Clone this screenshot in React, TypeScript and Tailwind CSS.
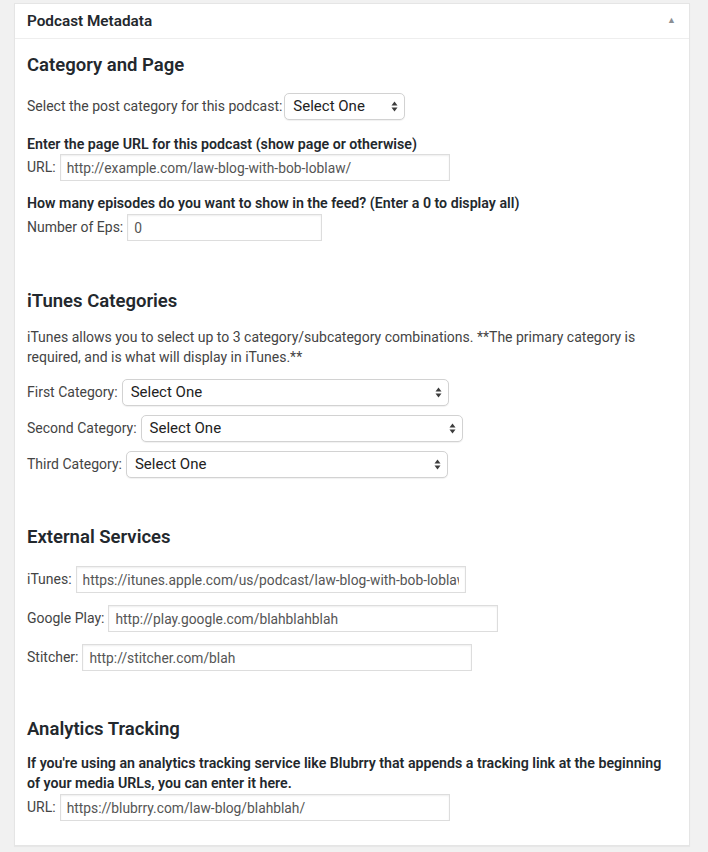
import React from 'react';

const font = "font-['Roboto','Liberation_Sans',sans-serif]";

const Arrows: React.FC = () => (
  <svg width="7" height="11" viewBox="0 0 7 11" className="shrink-0">
    <path d="M3.5 0.5 L6.5 4.5 L0.5 4.5 Z" fill="#3c3c3c" />
    <path d="M3.5 10.5 L6.5 6.5 L0.5 6.5 Z" fill="#3c3c3c" />
  </svg>
);

const FakeSelect: React.FC<{ width: string }> = ({ width }) => (
  <div
    className={`${width} h-[27px] flex items-center justify-between pl-2 pr-[6px] bg-white border border-[#d2d2d2] rounded-[5px] shadow-[0_1px_1px_rgba(0,0,0,0.06)] text-[15px] text-[#222]`}
  >
    <span>Select One</span>
    <Arrows />
  </div>
);

const TextInput: React.FC<{ value: string; width?: string }> = ({ value, width = 'w-[390px]' }) => (
  <input
    readOnly
    value={value}
    className={`${width} h-[27px] px-[6px] border border-[#dddddd] bg-white text-[13.8px] text-[#555] shadow-[inset_0_1px_2px_rgba(0,0,0,0.07)] outline-none ${font}`}
  />
);

const Heading: React.FC<{ children: React.ReactNode; className?: string }> = ({ children, className = '' }) => (
  <h3 className={`text-[18.5px] leading-[24px] font-semibold text-[#23282d] ${className}`}>{children}</h3>
);

export default function App() {
  return (
    <div className={`min-h-[852px] bg-[#f1f1f1] pt-[3px] px-[14px] ${font}`}>
      <div className="w-[676px] bg-white border border-[#e5e5e5] shadow-[0_1px_1px_rgba(0,0,0,0.04)] text-[14px] text-[#444]">
        <div className="h-[35px] flex items-center justify-between pl-3 pr-[12px] border-b border-[#eeeeee]">
          <span className="text-[15.3px] font-semibold text-[#23282d]">Podcast Metadata</span>
          <span className="text-[9px] text-[#8c8f94] pr-[1px]">▲</span>
        </div>

        <div className="px-3 pt-[14px] pb-[24px]">
          <Heading>Category and Page</Heading>
          <div className="mt-[16px] flex items-center gap-[2px]">
            <span>Select the post category for this podcast:</span>
            <FakeSelect width="w-[121px]" />
          </div>

          <p className="mt-[14px] leading-[20px] text-[14.2px] font-semibold text-[#23282d]">
            Enter the page URL for this podcast (show page or otherwise)
          </p>
          <div className="flex items-center gap-[4px]">
            <span>URL:</span>
            <TextInput value="http://example.com/law-blog-with-bob-loblaw/" />
          </div>

          <p className="mt-[12px] leading-[20px] text-[14.2px] font-semibold text-[#23282d]">
            How many episodes do you want to show in the feed? (Enter a 0 to display all)
          </p>
          <div className="mt-[1px] flex items-center gap-[4px]">
            <span>Number of Eps:</span>
            <TextInput value="0" width="w-[195px]" />
          </div>

          <Heading className="mt-[48px]">iTunes Categories</Heading>
          <p className="mt-[14px] leading-[20px]">
            iTunes allows you to select up to 3 category/subcategory combinations. **The primary category is required, and is what will display in iTunes.**
          </p>
          <div className="mt-[12px] flex flex-col gap-[9px]">
            <div className="flex items-center gap-[4px]">
              <span>First Category:</span>
              <FakeSelect width="w-[327px]" />
            </div>
            <div className="flex items-center gap-[4px]">
              <span>Second Category:</span>
              <FakeSelect width="w-[322px]" />
            </div>
            <div className="flex items-center gap-[4px]">
              <span>Third Category:</span>
              <FakeSelect width="w-[322px]" />
            </div>
          </div>

          <Heading className="mt-[47px]">External Services</Heading>
          <div className="mt-[17px] flex flex-col gap-[12px]">
            <div className="flex items-center gap-[4px]">
              <span>iTunes:</span>
              <TextInput value="https://itunes.apple.com/us/podcast/law-blog-with-bob-loblaw/id1234567890" />
            </div>
            <div className="flex items-center gap-[4px]">
              <span>Google Play:</span>
              <TextInput value="http://play.google.com/blahblahblah" />
            </div>
            <div className="flex items-center gap-[4px]">
              <span>Stitcher:</span>
              <TextInput value="http://stitcher.com/blah" />
            </div>
          </div>

          <Heading className="mt-[46px]">Analytics Tracking</Heading>
          <p className="mt-[13px] leading-[19.5px] text-[14.2px] font-semibold text-[#23282d]">
            If you're using an analytics tracking service like Blubrry that appends a tracking link at the beginning of your media URLs, you can enter it here.
          </p>
          <div className="mt-[1px] flex items-center gap-[4px]">
            <span>URL:</span>
            <TextInput value="https://blubrry.com/law-blog/blahblah/" />
          </div>
        </div>
      </div>
    </div>
  );
}
